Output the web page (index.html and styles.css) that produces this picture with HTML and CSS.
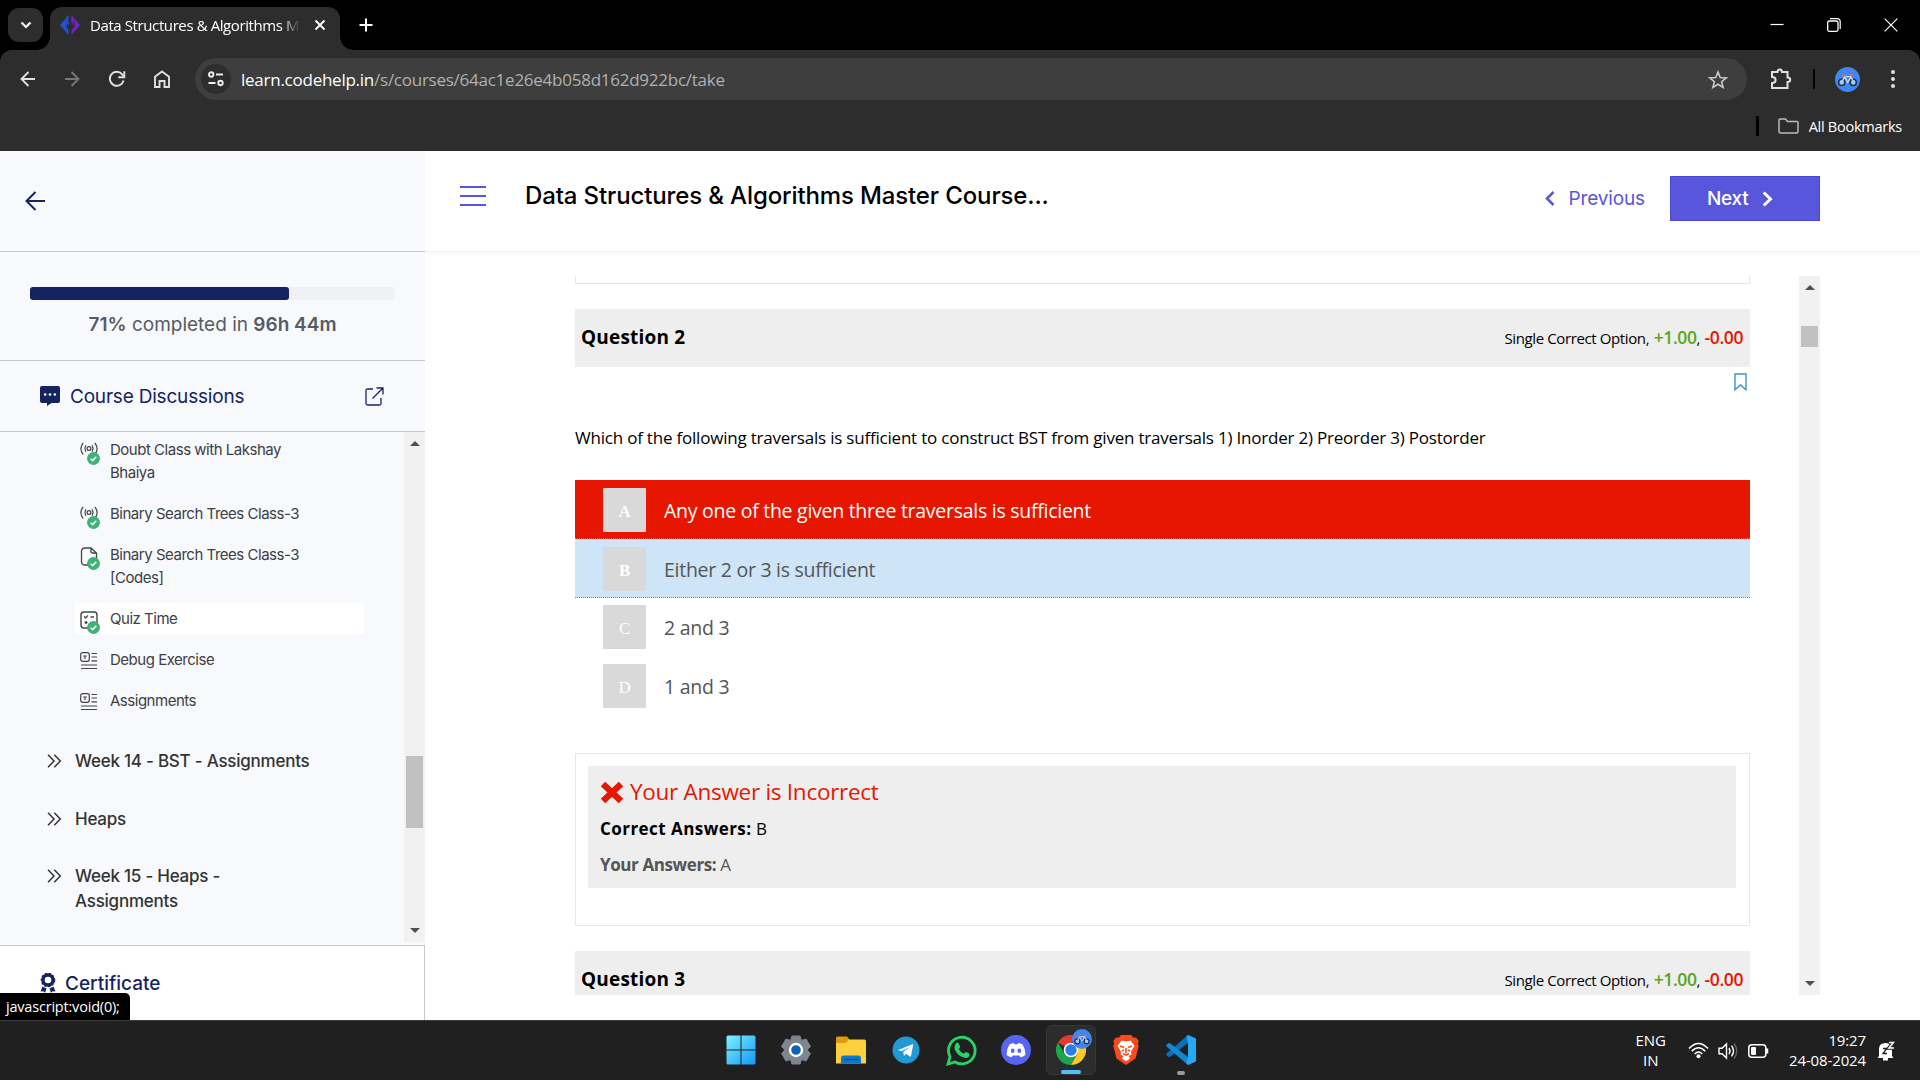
FILE: index.html
```html
<!DOCTYPE html>
<html lang="en">
<head>
<meta charset="utf-8">
<title>Data Structures &amp; Algorithms Master Course</title>
<link rel="stylesheet" href="styles.css">
</head>
<body>
<svg class="defs" width="0" height="0">
  <defs>
    <symbol id="live" viewBox="0 0 18 14"><g fill="none" stroke="#444" stroke-width="1.2"><circle cx="9" cy="6.500" r="1.900"/><path d="M6 3.200Q4 6.500 6 9.800M12 3.200Q14 6.500 12 9.800M3.200 1Q-1.500 6.500 3.200 12.500M14.800 1Q19.500 6.500 14.800 12.500"/></g></symbol>
    <symbol id="check" viewBox="0 0 13 13"><circle cx="6.500" cy="6.500" r="6.500" fill="#3fb374"/><path d="M3.700 6.700l2 1.900 3.600-3.800" fill="none" stroke="#fff" stroke-width="1.500"/></symbol>
    <symbol id="article" viewBox="0 0 18 18"><g fill="none" stroke="#444" stroke-width="1.200"><rect x=".7" y=".7" width="8.600" height="8.600" rx="2"/><path d="M3.200 4h3.600M5 4v3M11.500 1.500H17M11.500 5H17M11.500 8.800H17M1 13h16M1 16.500h16"/></g></symbol>
    <symbol id="dbl" viewBox="0 0 15 14"><path d="M1 .7l6 6.300-6 6.300M7.300 .7l6 6.300-6 6.300" fill="none" stroke="#333" stroke-width="1.500"/></symbol>
    <symbol id="bike" viewBox="0 0 26 26"><circle cx="13" cy="13" r="13" fill="#4285f4"/><g fill="#8fd0ff" stroke="#26324a" stroke-width="1.600"><circle cx="7" cy="16" r="3.200"/><circle cx="19" cy="16" r="3.200"/></g><path d="M7 16l3-6h6.500l3 6M10 10l3 6 4-6" fill="none" stroke="#c8d5e8" stroke-width="1.300"/><path d="M7.500 9h4M15.500 8h3" stroke="#e8694a" stroke-width="1.700"/></symbol>
  </defs>
</svg>

<header class="browser">
  <div class="tabstrip">
    <button class="tab-search"><svg width="12" height="8" viewBox="0 0 12 8"><path d="M1.500 1.500L6 6l4.500-4.500" fill="none" stroke="#fff" stroke-width="2.200"/></svg></button>
    <div class="tab">
      <svg width="20" height="20" viewBox="0 0 20 20"><path d="M8.500 0v5L5.500 9v2.500l3 3.500v5L0 10z" fill="#1d57c9"/><path d="M11.500 0L20 10l-8.500 10v-5l3-3.500V8.500L13 6.500V10L11 7z" fill="#6a24c4"/><path d="M5.500 4L9 7.500v3L7 8.500v4L5 10z" fill="#3a45cb"/></svg>
      <span class="tab-title">Data Structures &amp; Algorithms M</span>
      <svg width="12" height="12" viewBox="0 0 12 12"><path d="M1.500 1.500l9 9m0-9l-9 9" stroke="#fff" stroke-width="1.800"/></svg>
    </div>
    <svg class="new-tab" width="14" height="14" viewBox="0 0 14 14"><path d="M7 .5v13M.5 7h13" stroke="#fff" stroke-width="2"/></svg>
    <div class="win-controls">
      <svg width="14" height="14" viewBox="0 0 14 14"><path d="M.5 6.500h13" stroke="#fff" stroke-width="1.200"/></svg>
      <svg width="14" height="14" viewBox="0 0 14 14"><rect x=".7" y="3" width="10.300" height="10.300" rx="1.500" fill="none" stroke="#fff" stroke-width="1.300"/><path d="M3 .7h7.500a2.700 2.700 0 0 1 2.700 2.700V11" fill="none" stroke="#fff" stroke-width="1.200"/></svg>
      <svg width="14" height="14" viewBox="0 0 14 14"><path d="M.7.7l12.600 12.600m0-12.600L.7 13.300" stroke="#fff" stroke-width="1.200"/></svg>
    </div>
  </div>
  <div class="toolbar">
    <div class="nav">
      <svg width="16" height="16" viewBox="0 0 16 16"><path d="M15 8H2m6.500-7L1.500 8l7 7" fill="none" stroke="#e0e0e0" stroke-width="1.900"/></svg>
      <svg width="16" height="16" viewBox="0 0 16 16"><path d="M1 8h13M7.500 1l7 7-7 7" fill="none" stroke="#777" stroke-width="1.900"/></svg>
      <svg width="18" height="18" viewBox="0 0 18 18"><path d="M15.600 10.500A7 7 0 1 1 14.200 4.300L15.500 6" fill="none" stroke="#e0e0e0" stroke-width="1.900"/><path d="M16.300 1.300v6h-6" fill="none" stroke="#e0e0e0" stroke-width="1.900"/></svg>
      <svg width="16" height="18" viewBox="0 0 16 18"><path d="M1 17V6.800L8 1.500l7 5.300V17h-4.500v-6h-5v6z" fill="none" stroke="#e0e0e0" stroke-width="1.900"/></svg>
    </div>
    <div class="address">
      <span class="site-info"><svg width="18" height="16" viewBox="0 0 18 16"><g fill="none" stroke="#eee" stroke-width="1.900"><circle cx="4.200" cy="3.500" r="2.200"/><circle cx="13.500" cy="12" r="2.200"/><path d="M9 3.500h7M1.500 12h7"/></g></svg></span>
      <span class="url"><b>learn.codehelp.in</b>/s/courses/64ac1e26e4b058d162d922bc/take</span>
      <svg width="20" height="19" viewBox="0 0 20 19"><path d="M10 2l2.200 5.500 6 .4-4.600 3.800 1.500 5.700L10 14.200l-5.100 3.200 1.500-5.700L1.800 7.900l6-.4z" fill="none" stroke="#c9c9c9" stroke-width="1.600"/></svg>
    </div>
    <svg class="ext" width="22" height="22" viewBox="0 0 22 22"><path d="M2 20v-5c2.800 0 3.600-1.500 3.600-3S4.800 9 2 9V4h5.500C7.500 2.500 8.500 1.500 9.800 1.500S12 2.500 12 4h5.500v5.500c1.700 0 2.700 1 2.700 2.200s-1 2.300-2.700 2.300v6z" fill="none" stroke="#e0e0e0" stroke-width="2"/></svg>
    <i class="bar"></i>
    <svg class="avatar" width="25" height="25"><use href="#bike"/></svg>
    <svg class="dots" width="4" height="18" viewBox="0 0 4 18"><g fill="#e0e0e0"><circle cx="2" cy="2" r="2"/><circle cx="2" cy="9" r="2"/><circle cx="2" cy="16" r="2"/></g></svg>
  </div>
  <div class="bookmarks">
    <i class="bar"></i>
    <svg width="21" height="16" viewBox="0 0 21 16"><path d="M1 13.500V2q0-1 1-1h5.500l2 2.500H19q1 0 1 1v9q0 1.500-1.500 1.500h-16Q1 15 1 13.500z" fill="none" stroke="#bbb" stroke-width="1.500"/></svg>
    <span>All Bookmarks</span>
  </div>
</header>

<main class="page">
  <aside class="sidebar">
    <div class="back"><svg width="20" height="20" viewBox="0 0 20 20"><path d="M20 10H1.500M10.500 1L1.500 10l9 9" fill="none" stroke="#152460" stroke-width="2"/></svg></div>
    <div class="progress">
      <div class="track"><div class="fill" style="width:71%"></div></div>
      <p><b>71%</b> completed in <b>96h 44m</b></p>
    </div>
    <div class="discuss">
      <svg width="20" height="20" viewBox="0 0 20 20"><path d="M2 0h16q2 0 2 2v13q0 2-2 2h-6.500L7 20v-3H2q-2 0-2-2V2Q0 0 2 0z" fill="#152460"/><g fill="#fff"><circle cx="5.200" cy="8.500" r="1.300"/><circle cx="10" cy="8.500" r="1.300"/><circle cx="14.800" cy="8.500" r="1.300"/></g></svg>
      <span>Course Discussions</span>
      <svg width="19" height="19" viewBox="0 0 19 19"><path d="M8 2H2.500Q1 2 1 3.500v13Q1 18 2.500 18h12q1.500 0 1.500-1.500V11M11.500 1H18v6.500M18 1L7.500 11.500" fill="none" stroke="#152460" stroke-width="1.300"/></svg>
    </div>
    <div class="list">
      <div class="items">
        <div class="lessons">
          <div class="lesson"><span class="ico"><svg width="18" height="14"><use href="#live"/></svg><svg class="ok" width="13" height="13"><use href="#check"/></svg></span><span>Doubt Class with Lakshay<br>Bhaiya</span></div>
          <div class="lesson"><span class="ico"><svg width="18" height="14"><use href="#live"/></svg><svg class="ok" width="13" height="13"><use href="#check"/></svg></span><span>Binary Search Trees Class-3</span></div>
          <div class="lesson"><span class="ico"><svg width="18" height="19" viewBox="0 0 18 19"><path d="M11 1H5Q1.500 1 1.500 4.500v10Q1.500 18 5 18h8q3.500 0 3.500-3.500V6zV4.500Q11 6 12.500 6h4" fill="none" stroke="#444" stroke-width="1.300"/></svg><svg class="ok" width="13" height="13"><use href="#check"/></svg></span><span>Binary Search Trees Class-3<br>[Codes]</span></div>
          <div class="lesson current"><span class="ico"><svg width="18" height="18" viewBox="0 0 18 18"><rect x="1" y="1" width="16" height="16" rx="3" fill="none" stroke="#444" stroke-width="1.400"/><path d="M4 5.500l1.500 1.300L8 4.500M10.500 6h3.500M4.500 11.500h3M6 10v3M10.500 12h3.500" fill="none" stroke="#444" stroke-width="1.300"/></svg><svg class="ok" width="13" height="13"><use href="#check"/></svg></span><span>Quiz Time</span></div>
          <div class="lesson"><span class="ico"><svg width="18" height="18"><use href="#article"/></svg></span><span>Debug Exercise</span></div>
          <div class="lesson"><span class="ico"><svg width="18" height="18"><use href="#article"/></svg></span><span>Assignments</span></div>
        </div>
        <div class="week"><svg width="15" height="14"><use href="#dbl"/></svg><span>Week 14 - BST - Assignments</span></div>
        <div class="week"><svg width="15" height="14"><use href="#dbl"/></svg><span>Heaps</span></div>
        <div class="week"><svg width="15" height="14"><use href="#dbl"/></svg><span>Week 15 - Heaps -<br>Assignments</span></div>
      </div>
      <div class="scroll side-scroll"><i class="up"></i><i class="thumb"></i><i class="down"></i></div>
    </div>
    <div class="cert">
      <svg width="16" height="20" viewBox="0 0 16 20"><circle cx="8" cy="7" r="5" fill="none" stroke="#152460" stroke-width="3.400"/><circle cx="8" cy="7" r="6.700" fill="none" stroke="#152460" stroke-width="1.200" stroke-dasharray="2.500 1.500"/><path d="M2.500 13.500l4 2L5 20l-1.500-1.700L.5 18.500zM13.500 13.500l-4 2L11 20l1.500-1.700 3 .2z" fill="#152460"/></svg>
      <span>Certificate</span>
    </div>
    <div class="status">javascript:void(0);</div>
  </aside>

  <section class="main">
    <div class="course-head">
      <div class="burger"><i></i><i></i><i></i></div>
      <h1>Data Structures &amp; Algorithms Master Course...</h1>
      <a class="prev"><svg width="10" height="15" viewBox="0 0 10 15"><path d="M8.500 1l-6.500 6.500 6.500 6.500" fill="none" stroke="#5856db" stroke-width="2.500"/></svg><span>Previous</span></a>
      <a class="next"><span>Next</span><svg width="11" height="16" viewBox="0 0 11 16"><path d="M1.700 1.500L8.500 8l-6.800 6.500" fill="none" stroke="#fff" stroke-width="3"/></svg></a>
    </div>
    <div class="quiz">
      <div class="questions">
        <div class="prev-box"></div>
        <div class="q-head"><h2>Question 2</h2><p>Single Correct Option, <b class="plus">+1.00</b>, <b class="minus">-0.00</b></p></div>
        <div class="mark"><svg width="13" height="18" viewBox="0 0 13 18"><path d="M1 1h11v15.800L6.500 12 1 16.800z" fill="none" stroke="#3b93cf" stroke-width="1.400"/></svg></div>
        <p class="q-text">Which of the following traversals is sufficient to construct BST from given traversals 1) Inorder 2) Preorder 3) Postorder</p>
        <div class="option wrong"><i>A</i><span>Any one of the given three traversals is sufficient</span></div>
        <div class="option right"><i>B</i><span>Either 2 or 3 is sufficient</span></div>
        <div class="option"><i>C</i><span>2 and 3</span></div>
        <div class="option"><i>D</i><span>1 and 3</span></div>
        <div class="result">
          <div class="verdict">
            <h3><svg width="24" height="24" viewBox="0 0 24 24"><path d="M3 4l18 17M21 4L3 21" stroke="#e61600" stroke-width="6.500"/></svg><span>Your Answer is Incorrect</span></h3>
            <p class="correct"><b>Correct Answers:</b> <span>B</span></p>
            <p class="yours"><b>Your Answers:</b> <span>A</span></p>
          </div>
        </div>
        <div class="q-head"><h2>Question 3</h2><p>Single Correct Option, <b class="plus">+1.00</b>, <b class="minus">-0.00</b></p></div>
      </div>
      <div class="scroll main-scroll"><i class="up"></i><i class="thumb"></i><i class="down"></i></div>
    </div>
  </section>
</main>

<footer class="taskbar">
  <div class="apps">
    <span class="app"><svg width="30" height="30" viewBox="0 0 30 30"><defs><linearGradient id="w" x1="0" y1="0" x2="1" y2="1"><stop offset="0" stop-color="#7df3ff"/><stop offset="1" stop-color="#1297f7"/></linearGradient></defs><path d="M2 .5h12.500v14H.5V2Q.5.500 2 .5zM15.500.5H28q1.500 0 1.500 1.500v12.500h-14zM.5 15.500h14v14H2Q.5 29.500.5 28zM15.500 15.500h14V28q0 1.500-1.500 1.500H15.500z" fill="url(#w)"/></svg></span>
    <span class="app"><svg width="30" height="30" viewBox="0 0 30 30"><path d="M11 1h8l1.500 4.500L25 4l4.500 7.500-3.300 3.500 3.300 3.500L25 26l-4.500-1.500L19 29h-8l-1.500-4.500L5 26 .5 18.500 3.800 15 .5 11.500 5 4l4.500 1.500z" fill="#7d858f" stroke="#7d858f" stroke-linejoin="round"/><circle cx="15" cy="15" r="6" fill="#0f62b5" stroke="#fff" stroke-width="2.400"/></svg></span>
    <span class="app"><svg width="30" height="28" viewBox="0 0 30 28"><path d="M0 2Q0 .5 1.500.5H11l2.500 3V8H0z" fill="#e09a0b"/><path d="M13 3.500h15.500Q30 3.500 30 5v22.500H0V7h9.500z" fill="#fccf3e"/><path d="M5 27.500V22q0-2.500 2.500-2.500h15q2.500 0 2.500 2.500v5.500z" fill="#0f78cc"/><path d="M8 23.500h14" stroke="#0a4a86" stroke-width="1.300"/></svg></span>
    <span class="app"><svg width="28" height="28" viewBox="0 0 28 28"><circle cx="14" cy="14" r="13.500" fill="#2199d4"/><path d="M6 14L20.500 8.300q.8 0 .6 1L19 20q-.5 1-1.500.3L14 17.800 12 20l-.8-4L18 10.800 9.500 15.300z" fill="#fff"/></svg></span>
    <span class="app"><svg width="31" height="31" viewBox="0 0 31 31"><path d="M2 29l2-7.300A13.300 13.300 0 1 1 9 27z" fill="none" stroke="#25d366" stroke-width="2.800"/><path d="M10.500 8q1-.8 2 0l1.600 3.500q.2.800-1.400 2.500 1.700 3.400 5 4.800 1.700-2 2.300-1.900l3.300 1.700q.7.800-.3 2.800-1.500 2-4.500 1.400-7.500-2.300-9.700-8.300-1-4 1.700-6.500z" fill="#25d366"/></svg></span>
    <span class="app"><svg width="30" height="30" viewBox="0 0 30 30"><circle cx="15" cy="15" r="15" fill="#5865f2"/><path d="M12.500 8l.7 1.300h3.600L17.500 8l4 1.300q3.300 5.500 2.800 10.700-2 1.700-5 2.200l-1-1.800h-6.600l-1 1.800q-3-.5-5-2.200-.5-5.200 2.800-10.700z" fill="#fff"/><ellipse cx="11.700" cy="15.800" rx="1.900" ry="2.200" fill="#5865f2"/><ellipse cx="18.300" cy="15.800" rx="1.900" ry="2.200" fill="#5865f2"/></svg></span>
    <span class="app active"><svg width="30" height="30" viewBox="0 0 30 30"><path d="M15 15L2 7.500A15 15 0 0 1 28 7.500H15z" fill="#e33b2e"/><path d="M2 7.500A15 15 0 0 0 15 30l6.500-11.300L15 15 8.500 18.700z" fill="#1da44c"/><path d="M28 7.500A15 15 0 0 1 15 30l6.500-11.200L21 7.500z" fill="#fcc920"/><circle cx="15" cy="15" r="7.300" fill="#fff"/><circle cx="15" cy="15" r="5.700" fill="#2b7de9"/></svg><svg class="badge" width="20" height="20" viewBox="0 0 26 26"><use href="#bike" width="26" height="26"/></svg><i class="run"></i></span>
    <span class="app"><svg width="26" height="30" viewBox="0 0 26 30"><path d="M8 0h10l2.500 2.800L23 2.500l2.700 3.500-.9 3 1 1.500-3.300 13L13 30 3.500 23.500.2 10.500l1-1.500-.9-3L3 2.500l2.500.3z" fill="#fb4a1c"/><path d="M8.500 5.500L13 6.500l4.500-1 4 5.500-3.500 5.500.5 3-3 1.500 1.500 2.500-4 2.700-4-2.700 1.500-2.500-3-1.500.5-3L4.500 11z" fill="#fff"/><path d="M7 11l4 1.500M19 11l-4 1.500M13 13v5M10 18.500l3 1.500 3-1.500M9 16l2-1M17 16l-2-1" stroke="#fb4a1c" stroke-width="1.600" fill="none"/></svg></span>
    <span class="app"><svg width="30" height="30" viewBox="0 0 30 30"><path d="M22 0v8L3.500 22.300.5 20.500v-2z" fill="#0b70b8"/><path d="M22 30v-8L3.500 7.700.5 9.500v2z" fill="#1287d4"/><path d="M22 0l8 3.500v23L22 30l-1.500-1.500L22 22V8l-1.500-6.500z" fill="#27a8f2"/></svg><i class="run idle"></i></span>
  </div>
  <div class="tray">
    <p class="lang">ENG<br>IN</p>
    <svg class="wifi" width="21" height="17" viewBox="0 0 21 17"><g fill="none" stroke="#fff" stroke-width="1.600"><path d="M1 6.500Q10.500-3.500 20 6.500M3.800 9.300q6.700-7 13.400 0M6.700 12q3.800-4 7.600 0"/></g><circle cx="10.500" cy="14.300" r="2" fill="#fff"/></svg>
    <svg class="vol" width="20" height="18" viewBox="0 0 20 18"><g fill="none" stroke="#fff" stroke-width="1.400"><path d="M1 6.300h3L8.500 2v14L4 11.700H1z"/><path d="M11 6q2 3 0 6M13.500 3.700q4 5.300 0 10.600"/><path d="M16 1.500q5.500 7.500 0 15" stroke="#666"/></g></svg>
    <svg class="bat" width="21" height="14" viewBox="0 0 21 14"><rect x=".8" y=".8" width="17" height="12.400" rx="3" fill="none" stroke="#fff" stroke-width="1.500"/><rect x="3" y="3" width="5" height="8" rx="1" fill="#fff"/><path d="M19 4.500v5" stroke="#fff" stroke-width="2.500"/></svg>
    <p class="clock">19:27<br>24-08-2024</p>
    <svg class="bell" width="18" height="20" viewBox="0 0 18 20"><path d="M2 15V8q0-6 6.500-6T15 8v7l1.500 2H.5z" fill="#fff"/><path d="M6 18.200h5" stroke="#fff" stroke-width="2.600"/><path d="M6 7.500h3.800L6 12.500h4" fill="none" stroke="#202020" stroke-width="1.300"/><path d="M12 1.500h4.500L12 7h5" fill="none" stroke="#202020" stroke-width="3.600"/><path d="M12 1.500h4.500L12 7h5" fill="none" stroke="#fff" stroke-width="1.500"/></svg>
  </div>
</footer>
</body>
</html>
```
FILE: styles.css
```css
* { box-sizing: border-box; }
body { margin: 0; width: 1920px; height: 1080px; overflow: hidden; display: grid; grid-template-rows: 151px 869px 60px; font-family: "Open Sans", "Noto Sans", sans-serif; background: #fff; }
h1, h2, h3, p { margin: 0; }
i { font-style: normal; }
svg { display: block; flex: none; }
span, p, h1, h2, h3 { white-space: nowrap; }
.defs { position: absolute; }

/* browser chrome */
.browser { background: #000; display: grid; grid-template-rows: 50px 58px 43px; }
.tabstrip { display: flex; align-items: flex-start; padding-left: 8px; }
.tab-search { width: 35px; height: 34px; margin: 8px 7px 0 0; padding: 0; border: 0; border-radius: 11px; background: #2d2d2d; display: grid; place-items: center; }
.tab { position: relative; width: 290px; height: 43px; margin-top: 7px; border-radius: 12px 12px 0 0; background: #2d2d2d; display: flex; align-items: center; padding: 0 14px 7px 10px; }
.tab::before, .tab::after { content: ""; position: absolute; bottom: 0; width: 13px; height: 13px; }
.tab::before { left: -13px; background: radial-gradient(circle at 0 0, transparent 12.500px, #2d2d2d 13px); }
.tab::after { right: -13px; background: radial-gradient(circle at 100% 0, transparent 12.500px, #2d2d2d 13px); }
.tab-title { width: 214px; margin: 0 10px; color: #fff; font-size: 15px; letter-spacing: -.4px; -webkit-mask-image: linear-gradient(90deg, #000 192px, transparent 210px); mask-image: linear-gradient(90deg, #000 192px, transparent 210px); }
.new-tab { margin: 18px 0 0 19px; }
.win-controls { margin: 18px 22px 0 auto; display: flex; gap: 43px; }
.toolbar { background: #2d2d2d; border-radius: 12px 12px 0 0; display: flex; align-items: center; padding-left: 20px; }
.nav { display: flex; align-items: center; width: 175px; gap: 28px; }
.address { width: 1552px; height: 42px; border-radius: 21px; background: #3e3e3e; display: flex; align-items: center; padding: 0 19px 0 6px; }
.site-info { width: 30px; height: 30px; border-radius: 50%; background: #2d2d2d; display: grid; place-items: center; }
.url { flex: 1; margin-left: 10px; font-size: 17px; color: #b0b0b0; letter-spacing: -.25px; }
.url b { font-weight: 400; color: #fff; }
.ext { margin-left: 23px; }
.toolbar .bar { margin-left: 21px; width: 2px; }
.bar { width: 3px; height: 20px; background: #000; border-radius: 1px; }
.avatar { margin-left: 20px; }
.dots { margin-left: 31px; }
.bookmarks { background: #2d2d2d; display: flex; justify-content: flex-end; align-items: center; padding: 0 18px 8px 0; color: #fff; font-size: 14.600px; letter-spacing: -.3px; }
.bookmarks svg { margin: 0 10px 0 19px; }

/* sidebar */
.page { display: grid; grid-template-columns: 425px 1495px; min-height: 0; }
.sidebar { position: relative; background: #f8f9fc; display: grid; grid-template-rows: 101px 109px 71px 514px 74px; font-family: Inter, sans-serif; }
.back, .progress, .discuss { border-bottom: 1px solid #c6c8cc; }
.back { padding: 40px 25px; }
.progress { padding: 35px 30px 0; }
.track { height: 13px; border-radius: 3px; background: #f0f1f5; }
.fill { height: 13px; border-radius: 3px; background: #152460; }
.progress p { margin-top: 12px; text-align: center; font-size: 19px; line-height: 26px; color: #555b66; letter-spacing: 0; }
.progress b { font-weight: 600; }
.discuss { display: flex; align-items: center; padding: 0 41px 0 40px; color: #152460; font-size: 19px; letter-spacing: -.2px; }
.discuss span { flex: 1; margin-left: 10px; }
.list { display: flex; justify-content: space-between; padding-bottom: 3px; border-bottom: 1px solid #c6c8cc; overflow: hidden; }
.items { padding: 2px 0 0 47px; width: 364px; color: #3c4043; }
.lessons { margin-left: 28px; display: grid; gap: 10px; }
.lesson { display: flex; padding: 4px 5px; font-size: 15px; line-height: 23px; letter-spacing: -.48px; }
.lesson.current { background: #fff; }
.ico { position: relative; width: 30px; height: 23px; padding-top: 4px; }
.ok { position: absolute; left: 7px; top: 14px; }
.week { display: flex; margin-top: 32.500px; font-size: 17px; line-height: 25px; font-weight: 500; letter-spacing: -.24px; color: #333; }
.lessons + .week { margin-top: 33px; }
.week svg { margin: 5px 13px 0 0; }
.scroll { width: 21px; background: #f1f1f1; display: flex; flex-direction: column; align-items: center; }
.up, .down { border: 5px solid transparent; }
.up { border-top: 0; border-bottom-color: #505050; margin-top: 9px; }
.down { border-bottom: 0; border-top-color: #505050; margin: auto 0 9px; }
.thumb { width: 17px; background: #c1c1c1; }
.side-scroll .thumb { height: 72px; margin-top: 310px; }
.cert { background: #fff; border-right: 1px solid #c6c8cc; display: flex; padding: 27px 0 0 40px; color: #152460; font-size: 19px; font-weight: 500; line-height: 22px; letter-spacing: 0; }
.cert span { margin-left: 9px; }
.status { position: absolute; left: 0; bottom: 0; width: 130px; height: 27px; padding-left: 6px; border-radius: 0 5px 0 0; background: #000; color: #fff; font: 14.500px/27px "Open Sans", sans-serif; letter-spacing: -.2px; }

/* course header */
.main { min-width: 0; display: grid; grid-template-rows: 101px 768px; }
.course-head { display: flex; padding: 0 100px 0 35px; border-bottom: 1px solid #f0f0f0; box-shadow: 0 2px 3px rgba(0,0,0,.03); font-family: Inter, sans-serif; }
.burger { width: 26px; margin: 35px 39px 0 0; display: grid; grid-auto-rows: 2px; gap: 7px; }
.burger i { background: #5856db; }
h1 { flex: 1; margin-top: 29px; font-size: 24px; line-height: 32px; font-weight: 500; color: #000; letter-spacing: -.13px; }
.prev { display: flex; align-items: center; gap: 14px; height: 45px; margin: 25px 25px 0 0; color: #5856db; font-size: 19px; letter-spacing: -.15px; }
.next { width: 150px; height: 45px; margin-top: 25px; padding-left: 36px; display: flex; align-items: center; gap: 14px; background: #5856db; border: 1px solid #4a48d0; color: #fff; font-size: 19px; font-weight: 500; letter-spacing: -.3px; }

/* quiz */
.quiz { margin: 24px 100px 25px 150px; height: 719px; display: flex; justify-content: space-between; overflow: hidden; }
.questions { width: 1175px; }
.prev-box { height: 8px; border: 1px solid #e5e5e5; border-top: 0; margin-bottom: 25px; }
.q-head { height: 58px; padding: 0 7px 2px 6px; display: flex; justify-content: space-between; align-items: center; background: #eee; color: #000; }
h2 { font-size: 19px; font-weight: 700; letter-spacing: .2px; }
.q-head p { font-size: 15px; letter-spacing: -.38px; }
.q-head b { font-size: 17.500px; font-weight: 600; margin-left: 1px; letter-spacing: -.4px; }
.plus { color: #5aa51c; }
.minus { color: #e61600; }
.mark { height: 57px; display: flex; justify-content: flex-end; padding: 6px 3px 0 0; }
.q-text { height: 56px; padding-top: 1px; line-height: 26px; font-size: 17px; color: #000; letter-spacing: -.21px; }
.option { height: 59px; padding: 7px 0 0 28px; display: flex; align-items: flex-start; color: #555; font-size: 19.500px; letter-spacing: -.27px; }
.option i { width: 43px; height: 44px; background: #d9d9d9; color: #fff; font: 17px/48px "Liberation Serif", serif; text-align: center; }
.option span { margin-left: 18px; line-height: 46px; }
.option.wrong { padding-top: 8px; background: #e61600; color: #fff; border-bottom: 1px dotted #999; }
.option.right { padding-top: 8px; background: #cde5f7; border-bottom: 1px dotted #888; }
.wrong i, .right i { font-weight: 700; }
.result { height: 173px; margin: 37px 0 25px; padding: 12px 13px 12px 12px; border: 1px solid #e6e6e6; }
.verdict { height: 122px; padding: 8px 12px; background: #eee; font-size: 17px; }
h3 { display: flex; align-items: center; gap: 6px; height: 36px; color: #e61600; font-size: 22.500px; font-weight: 400; letter-spacing: -.28px; }
h3 span { margin-top: -2px; }
.verdict p { height: 36px; line-height: 38px; }
.correct { color: #000; }
.correct b { letter-spacing: .45px; }
.yours { color: #555; letter-spacing: -.4px; }
.main-scroll .thumb { height: 21px; margin-top: 36px; }

/* taskbar */
.taskbar { background: #202020; border-top: 1px solid #3c3c3c; position: relative; display: flex; justify-content: space-between; color: #fff; }
.apps { display: flex; gap: 5px; margin-left: 716px; padding-top: 4px; }
.app { position: relative; width: 50px; height: 50px; display: grid; place-items: center; }
.active { background: #2c2c2c; border: 1px solid #363636; border-radius: 6px; }
.badge { position: absolute; right: 3px; top: 3px; }
.run { position: absolute; bottom: 0; left: 50%; width: 20px; height: 4px; margin-left: -10px; border-radius: 2px; background: #4cc2ff; }
.idle { width: 8px; margin-left: -4px; background: #999; }
.tray { display: flex; align-items: center; padding-right: 25px; font-size: 15px; line-height: 20px; }
.tray p { margin-top: -1px; }
.lang { text-align: center; margin-right: 22px; }
.wifi { margin-right: 9px; }
.vol { margin-right: 10px; }
.bat { margin-right: 20px; }
.clock { text-align: right; margin-right: 11px; letter-spacing: -.13px; }
```
